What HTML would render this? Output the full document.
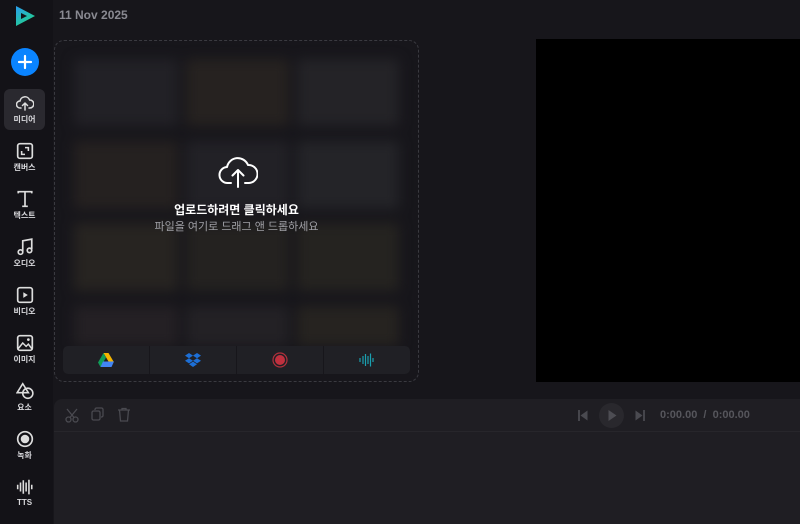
<!DOCTYPE html>
<html><head><meta charset="utf-8"><style>
*{margin:0;padding:0;box-sizing:border-box}
body{width:800px;height:524px;overflow:hidden;background:#17161b;font-family:"Liberation Sans","Noto Sans CJK KR",sans-serif;position:relative;color:#ddd}
.side{position:absolute;left:0;top:0;width:53px;height:524px;background:#131217}
.item{position:absolute;left:4px;width:41px;height:41px;border-radius:6px;text-align:center;font-size:8px;color:#d8d8dc;font-weight:bold}
.item svg{display:block;margin:5px auto 2px;width:18px;height:18px}
.item.act{background:#2a292f}
.date{position:absolute;left:59px;top:8px;font-size:12px;color:#8a8a92;font-weight:bold}
.up{position:absolute;left:54px;top:40px;width:365px;height:342px;border:1px dashed #3a3a40;border-radius:10px;overflow:hidden}
.grid{position:absolute;left:0;top:0;width:100%;height:100%;filter:blur(6px)}
.t{position:absolute;border-radius:3px}
.bar{position:absolute;left:8px;top:305px;width:347px;height:28px;background:#202025;border-radius:5px;display:flex}
.bar div{flex:1;border-right:1px solid #17161b;display:flex;align-items:center;justify-content:center}
.bar div:last-child{border:none}
.ctr{position:absolute;left:0;width:100%;text-align:center}
.prev{position:absolute;left:536px;top:39px;width:264px;height:343px;background:#000}
.tl{position:absolute;left:54px;top:399px;width:746px;height:125px;background:#1f1e23;border-top-left-radius:8px}
.tlh{height:33px;border-bottom:1px solid #27262b;position:relative}
</style></head><body>
<div class="side">
<svg style="position:absolute;left:14px;top:5px" width="22" height="22" viewBox="0 0 22 22"><defs><linearGradient id="g" x1="0" y1="0" x2="0.6" y2="1"><stop offset="0" stop-color="#2a9df0"/><stop offset="1" stop-color="#22d18a"/></linearGradient></defs><path d="M2 1 L21 11 L2 21 Z M7 8 L7 14 L13 11 Z" fill="url(#g)" fill-rule="evenodd"/></svg>
<div style="position:absolute;left:11px;top:48px;width:28px;height:28px;border-radius:50%;background:#0a84ff"><svg width="28" height="28"><path d="M14 8v12M8 14h12" stroke="#fff" stroke-width="2.2" stroke-linecap="round"/></svg></div>
<div class="item act" style="top:89px"><svg viewBox="0 0 18 16"><path d="M5 13H4a3.5 3.5 0 0 1 0-7 5 5 0 0 1 9.6-1A3.8 3.8 0 0 1 14 13h-1M9 15V8M6.5 10.5 9 8l2.5 2.5" fill="none" stroke="#ddd" stroke-width="1.5" stroke-linecap="round"/></svg>미디어</div>
<div class="item" style="top:137px"><svg viewBox="0 0 16 16"><rect x="1.5" y="1.5" width="13" height="13" rx="2" fill="none" stroke="#ddd" stroke-width="1.5"/><path d="M5 8v3h3M11 8V5H8" fill="none" stroke="#ddd" stroke-width="1.4"/></svg>캔버스</div>
<div class="item" style="top:185px"><svg viewBox="0 0 16 16"><path d="M2 3V1.5h12V3M8 1.5v13M5.5 14.5h5" fill="none" stroke="#ddd" stroke-width="1.5"/></svg>텍스트</div>
<div class="item" style="top:233px"><svg viewBox="0 0 16 16"><path d="M6 12V2.5l8-1.5v9" fill="none" stroke="#ddd" stroke-width="1.5"/><circle cx="4" cy="12.5" r="2" fill="none" stroke="#ddd" stroke-width="1.5"/><circle cx="12" cy="11" r="2" fill="none" stroke="#ddd" stroke-width="1.5"/></svg>오디오</div>
<div class="item" style="top:281px"><svg viewBox="0 0 16 16"><rect x="1.5" y="1.5" width="13" height="13" rx="2" fill="none" stroke="#ddd" stroke-width="1.5"/><path d="M6.5 5.5v5l4-2.5z" fill="#ddd"/></svg>비디오</div>
<div class="item" style="top:329px"><svg viewBox="0 0 16 16"><rect x="1.5" y="1.5" width="13" height="13" rx="2" fill="none" stroke="#ddd" stroke-width="1.5"/><path d="M2 13l4-5 3 3 2-2 3 4" fill="none" stroke="#ddd" stroke-width="1.3"/><circle cx="11" cy="5" r="1.2" fill="#ddd"/></svg>이미지</div>
<div class="item" style="top:377px"><svg viewBox="0 0 16 16"><path d="M6 1.5l-5 8h10z" fill="none" stroke="#ddd" stroke-width="1.4"/><circle cx="10.5" cy="10" r="4.5" fill="none" stroke="#ddd" stroke-width="1.4"/></svg>요소</div>
<div class="item" style="top:425px"><svg viewBox="0 0 16 16"><circle cx="8" cy="8" r="6.5" fill="none" stroke="#ddd" stroke-width="1.5"/><circle cx="8" cy="8" r="3.8" fill="#ddd"/></svg>녹화</div>
<div class="item" style="top:473px"><svg viewBox="0 0 16 16"><path d="M1.5 6v4M4 4v8M6.5 2v12M9 4v8M11.5 1.5v13M14 6v4" stroke="#ddd" stroke-width="1.4"/></svg>TTS</div>
</div>
<div class="date">11 Nov 2025</div>
<div class="up">
<div class="grid">
<div class="t" style="left:19px;top:18px;width:104px;height:67px;background:#222126"></div>
<div class="t" style="left:131px;top:18px;width:103px;height:67px;background:#262220"></div>
<div class="t" style="left:242px;top:18px;width:102px;height:67px;background:#242327"></div>
<div class="t" style="left:19px;top:100px;width:104px;height:68px;background:#252120"></div>
<div class="t" style="left:131px;top:100px;width:103px;height:68px;background:#222126"></div>
<div class="t" style="left:242px;top:100px;width:102px;height:68px;background:#242428"></div>
<div class="t" style="left:19px;top:182px;width:104px;height:68px;background:#272421"></div>
<div class="t" style="left:131px;top:182px;width:103px;height:68px;background:#242220"></div>
<div class="t" style="left:242px;top:182px;width:102px;height:68px;background:#252320"></div>
<div class="t" style="left:19px;top:265px;width:104px;height:40px;background:#242024"></div>
<div class="t" style="left:131px;top:265px;width:103px;height:40px;background:#232125"></div>
<div class="t" style="left:242px;top:265px;width:102px;height:40px;background:#262320"></div>
</div>
<svg class="ctr" style="top:112px;left:163px;width:40px;height:36px" viewBox="0 0 40 36"><path d="M13 30H10a8 8 0 0 1-1-16 11 11 0 0 1 21-2 8.5 8.5 0 0 1 1 18h-4M20 34V17M14.5 22.5 20 17l5.5 5.5" fill="none" stroke="#fff" stroke-width="2" stroke-linecap="round" stroke-linejoin="round"/></svg>
<div class="ctr" style="top:160px;font-size:12px;font-weight:bold;color:#fff">업로드하려면 클릭하세요</div>
<div class="ctr" style="top:177px;font-size:11px;color:#a0a0a6">파일을 여기로 드래그 앤 드롭하세요</div>
<div class="bar">
<div><svg width="16" height="14" viewBox="0 0 16 14"><path d="M5.5 0h5l5 8.5h-5z" fill="#f4b400"/><path d="M5.5 0 0 9.5l2.5 4.5L8 4.5z" fill="#0f9d58"/><path d="M2.5 14h11l2.5-5.5H5z" fill="#4285f4"/></svg></div>
<div><svg width="16" height="14" viewBox="0 0 16 14"><path d="M4 0 0 2.6 4 5.2 8 2.6zM12 0 8 2.6l4 2.6 4-2.6zM0 7.8l4 2.6 4-2.6-4-2.6zM12 5.2 8 7.8l4 2.6 4-2.6zM4 11.2 8 14l4-2.8-4-2.6z" fill="#1d6fd6"/></svg></div>
<div><svg width="16" height="16"><circle cx="8" cy="8" r="7" fill="none" stroke="#b0303c" stroke-width="1.2"/><circle cx="8" cy="8" r="5" fill="#c0303e"/></svg></div>
<div><svg width="16" height="14"><path d="M1 5v4M4 3v8M6.5 1v12M9 3v8M11.5 0.5v13M14 5v4" stroke="#1aa0b0" stroke-width="1.2"/></svg></div>
</div>
</div>
<div class="prev"></div>
<div class="tl"><div class="tlh">
<svg style="position:absolute;left:11px;top:9px" width="14" height="15"><circle cx="3.5" cy="11.5" r="2.5" fill="none" stroke="#4a4a50" stroke-width="1.3"/><circle cx="10.5" cy="11.5" r="2.5" fill="none" stroke="#4a4a50" stroke-width="1.3"/><path d="M5 9.5 12 1M9 9.5 2 1" stroke="#4a4a50" stroke-width="1.3"/></svg>
<svg style="position:absolute;left:37px;top:8px" width="14" height="15"><rect x="1" y="4" width="8" height="9" rx="1.5" fill="none" stroke="#4a4a50" stroke-width="1.3"/><path d="M4 3V2.5A1.5 1.5 0 0 1 5.5 1h5A1.5 1.5 0 0 1 12 2.5v6a1.5 1.5 0 0 1-1.5 1.5H10" fill="none" stroke="#4a4a50" stroke-width="1.3"/></svg>
<svg style="position:absolute;left:63px;top:8px" width="14" height="15"><path d="M1 3h12M5 3V1.5h4V3M2.5 3l1 11h7l1-11" fill="none" stroke="#4a4a50" stroke-width="1.3"/></svg>
<svg style="position:absolute;left:524px;top:11px" width="10" height="11"><path d="M1 0v11" stroke="#4a4a50" stroke-width="1.8"/><path d="M9.5 0.5v10L2.5 5.5z" fill="#4a4a50"/></svg>
<div style="position:absolute;left:545px;top:4px;width:25px;height:25px;border-radius:50%;background:#29282d"><svg width="25" height="25"><path d="M9.5 7v11l8-5.5z" fill="#4d4d53"/></svg></div>
<svg style="position:absolute;left:581px;top:11px" width="10" height="11"><path d="M9 0v11" stroke="#4a4a50" stroke-width="1.8"/><path d="M0.5 0.5v10l7-5z" fill="#4a4a50"/></svg>
<div style="position:absolute;left:606px;top:10px;font-size:11px;font-weight:bold;color:#56565c">0:00.00 &nbsp;/&nbsp; 0:00.00</div>
</div></div>
</body></html>
